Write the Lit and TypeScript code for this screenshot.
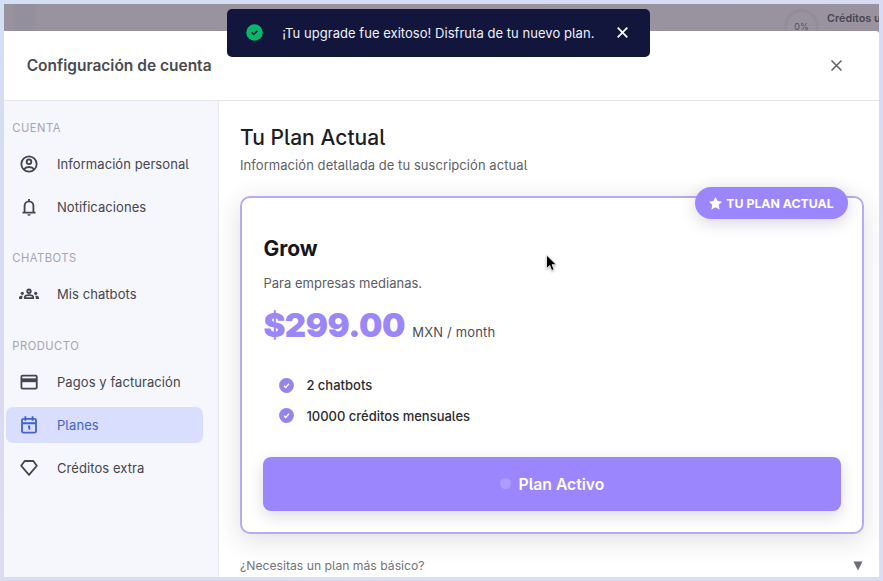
import { LitElement, html, css, svg } from "lit";
import { customElement } from "lit/decorators.js";
import { classMap } from "lit/directives/class-map.js";

const icons: Record<string, unknown> = {
  user: svg`<circle cx="12" cy="12" r="9.2"/><circle cx="12" cy="9.400" r="2.800"/><path d="M5.600 18.600c1.600-2.100 3.900-3 6.400-3s4.800.9 6.400 3"/>`,
  bell: svg`<path d="M4.200 18.700h15.600M6.700 18.600V10.600a5.300 5.300 0 0 1 10.600 0v8M12 2.300v2.500"/><path class="solid" d="M10 20.600h4a2 2 0 0 1-4 0z"/>`,
  groups: svg`<circle cx="12" cy="8.700" r="2.100"/><path d="M7 17v-1c0-1.700 2.400-2.700 5-2.700s5 1 5 2.700v1z"/><circle class="solid" cx="4" cy="11.200" r="1.900"/><circle class="solid" cx="20" cy="11.200" r="1.900"/><path class="solid" d="M0 18v-1.500c0-2 1.700-2.700 4.800-2.500-.8.900-1 1.900-1 4zM24 18v-1.500c0-2-1.700-2.700-4.800-2.500.8.900 1 1.900 1 4z"/>`,
  card: svg`<rect x="2.900" y="4.300" width="18.400" height="15.600" rx="1.300"/><path class="solid" d="M2.700 7.600h18.800v4.600H2.700z"/>`,
  calendar: svg`<rect x="3.600" y="4.600" width="16.800" height="16.600" rx="1.800"/><path d="M3.600 9.900h16.800M7.700 1.500v5.300M16.300 1.500v5.300M10.800 13.800h1.600v4"/>`,
  diamond: svg`<path d="M6.800 3.600h10.400l4.200 5.700L12 20.300 2.600 9.300z"/>`,
};

const sections = [
  { label: "CUENTA", items: [["user", "Información personal"], ["bell", "Notificaciones"]] },
  { label: "CHATBOTS", items: [["groups", "Mis chatbots"]] },
  { label: "PRODUCTO", items: [["card", "Pagos y facturación"], ["calendar", "Planes"], ["diamond", "Créditos extra"]] },
];

@customElement("account-sidebar")
class AccountSidebar extends LitElement {
  static styles = css`
    :host { display: block; box-sizing: border-box; width: 215px; flex: none; padding: 18px 15px 0 2px;
      background: #f6f6fd; border-right: 1px solid #e6e6ec; }
    .section { margin-bottom: 24.500px; }
    .label { height: 16px; line-height: 18px; margin: 0 0 11px 6.300px; font-size: 11.200px; color: #a5a5ae; letter-spacing: .5px; }
    .list { display: flex; flex-direction: column; gap: 7px; }
    .item { display: flex; align-items: center; height: 36px; border-radius: 7px; color: #45454d;
      font-size: 13px; letter-spacing: .07px; padding-left: 13.300px; gap: 17.700px; }
    .item.active { background: #d9deff; color: #4264c8; }
    .icon { width: 20px; height: 20px; fill: none; stroke: currentColor; stroke-width: 2.200; stroke-linejoin: round; }
    .solid { fill: currentColor; stroke: none; }
    .name { white-space: nowrap; }
  `;
  render() {
    return html`${sections.map((s) => html`
      <div class="section">
        <div class="label">${s.label}</div>
        <div class="list">
          ${s.items.map(([icon, name]) => html`
            <div class=${classMap({ item: true, active: name === "Planes" })}>
              <svg class="icon" viewBox="0 0 24 24">${icons[icon]}</svg>
              <span class="name">${name}</span>
            </div>`)}
        </div>
      </div>`)}`;
  }
}

@customElement("plan-card")
class PlanCard extends LitElement {
  static styles = css`
    :host { display: block; box-sizing: border-box; position: relative; height: 338px; border: 2px solid #b8a9f3;
      border-radius: 10px; padding: 35px 21px 0 21.400px; background: #fff; box-shadow: 0 6px 26px rgba(40, 40, 60, .15); }
    .badge { position: absolute; right: 14px; top: -11px; width: 153px; height: 32px; border-radius: 16px;
      background: #9b86fe; color: #fff; display: flex; align-items: center; justify-content: center; gap: 4px;
      font-size: 12.300px; font-weight: 700; box-shadow: 0 4px 16px rgba(60, 50, 100, .2); }
    .badge-text { white-space: nowrap; }
    .star { width: 13px; height: 13px; fill: #fff; }
    .plan { height: 30px; line-height: 32px; font-size: 21px; font-weight: 700; color: #15151f; }
    .desc { margin-top: 9px; height: 20px; line-height: 23px; font-size: 13px; color: #5c5c64; letter-spacing: .02px; }
    .price { display: flex; align-items: baseline; gap: 7.500px; margin-top: 9px; height: 48px; line-height: 48px; }
    .amount { font-size: 33px; font-weight: 900; letter-spacing: -.5px; color: #9b86fa; }
    .unit { font-size: 13px; letter-spacing: .15px; color: #4c4c55; }
    .features { display: flex; flex-direction: column; gap: 10.500px; margin: 26px 0 0 15.500px; }
    .feature { display: flex; align-items: center; height: 20px; gap: 12.500px; font-size: 13px; font-weight: 500; color: #2b2b33; }
    .check { width: 15px; height: 15px; }
    .button { display: flex; align-items: center; justify-content: center; gap: 7.500px; margin-top: 31px; height: 54px;
      border-radius: 8px; background: #9b86fe; color: #fff; font-size: 15.700px; font-weight: 600;
      box-shadow: 0 5px 15px rgba(40, 40, 70, .16); }
    .button-text { line-height: 20px; padding-top: 2px; }
    .dot { width: 11px; height: 11px; border-radius: 50%; background: #ae9dff; }
  `;
  feature(text: string) {
    return html`<div class="feature">
      <svg class="check" viewBox="0 0 15 15"><circle cx="7.500" cy="7.500" r="7.400" fill="#9683ed"/>
        <path d="M5 7.800l1.700 1.700L10 5.700" fill="none" stroke="#fff" stroke-width="1.300"/></svg>
      <span class="feature-text">${text}</span>
    </div>`;
  }
  render() {
    return html`
      <div class="badge">
        <svg class="star" viewBox="0 0 24 24"><path d="M12 0l3.800 7.500 8.200 1.100-6 5.700 1.600 8.700L12 18.800 4.400 23 6 14.300 0 8.600l8.200-1.100z"/></svg>
        <span class="badge-text">TU PLAN ACTUAL</span>
      </div>
      <div class="plan">Grow</div>
      <div class="desc">Para empresas medianas.</div>
      <div class="price"><span class="amount">$299.00</span><span class="unit">MXN / month</span></div>
      <div class="features">${this.feature("2 chatbots")}${this.feature("10000 créditos mensuales")}</div>
      <div class="button"><span class="dot"></span><span class="button-text">Plan Activo</span></div>
    `;
  }
}

@customElement("app-root")
class AppRoot extends LitElement {
  static styles = css`
    :host { display: block; box-sizing: border-box; position: relative; width: 883px; height: 581px; padding: 4px; overflow: hidden;
      background: linear-gradient(165deg, #d3dff3, #dadaf3 45%, #dcdcf4);
      font-family: Inter, "Liberation Sans", sans-serif; font-feature-settings: "cv05"; }
    .screen { display: flex; flex-direction: column; height: 573px; overflow: hidden; background: #98939e; }
    .backdrop { display: flex; justify-content: flex-end; height: 26.500px; flex: none; overflow: hidden;
      background: linear-gradient(90deg, #98939e 8px, #948f9c 12px, #948f9c 30px, #98939e 34px); }
    .ring { box-sizing: border-box; width: 35px; height: 35px; margin: 5px 8px 0 0; border: 3px solid #928d99; border-radius: 50%;
      display: flex; justify-content: center; align-items: center; flex: none; font-size: 9px; color: #55505f; }
    .credits { width: 52px; margin-top: 7px; line-height: 16px; font-size: 10.800px; font-weight: 600; color: #4a4555; white-space: nowrap; }
    .modal { display: flex; flex-direction: column; flex: 1; min-height: 0; background: #fff; border-radius: 0 3px 0 0; }
    .header { display: flex; align-items: center; justify-content: space-between; box-sizing: border-box; height: 70px; flex: none;
      padding: 0 36px 0 22.700px; border-bottom: 1px solid #e5e5eb; }
    .heading { font-size: 15.500px; font-weight: 600; color: #4a4a52; }
    .close { width: 13px; height: 13px; fill: none; stroke: #606066; stroke-width: 1.500; }
    .body { display: flex; flex: 1; min-height: 0; }
    .content { flex: 1; min-width: 0; padding: 22px 15px 0 21px; }
    .title { height: 28px; line-height: 29px; font-size: 21px; font-weight: 500; letter-spacing: .05px; color: #1d1d26; }
    .subtitle { margin: 4px 0 21.500px; height: 20px; line-height: 21px; font-size: 13px; letter-spacing: .06px; color: #5f5f67; }
    .more { display: flex; justify-content: space-between; align-items: center; height: 20px; margin-top: 21.500px; font-size: 12.200px; color: #73737c; }
    .arrow { width: 10px; height: 10px; margin-right: 1px; fill: #6d6d77; }
    .toast { position: absolute; left: 227px; top: 8.500px; width: 423px; height: 48.500px; box-sizing: border-box; padding: 0 22px 0 19.200px;
      border-radius: 5px; background: #12163d; color: #eef0fb; display: flex; align-items: center; font-size: 13px; letter-spacing: .04px; }
    .ok { width: 17px; height: 17px; margin-right: 19px; }
    .message { flex: 1; white-space: nowrap; }
    .dismiss { width: 11px; height: 11px; stroke: #fff; stroke-width: 1.700; fill: none; }
    .cursor { position: absolute; left: 544.500px; top: 254px; width: 13px; height: 19px; filter: drop-shadow(0 1px 1px rgba(0, 0, 0, .3)); }
  `;
  render() {
    return html`
      <div class="screen">
        <div class="backdrop"><div class="ring">0%</div><div class="credits">Créditos u</div></div>
        <div class="modal">
          <div class="header">
            <div class="heading">Configuración de cuenta</div>
            <svg class="close" viewBox="0 0 13 13"><path d="M1.500 1.500l10 10M11.500 1.500l-10 10"/></svg>
          </div>
          <div class="body">
            <account-sidebar></account-sidebar>
            <div class="content">
              <div class="title"><span class="title-text">Tu Plan Actual</span></div>
              <div class="subtitle">Información detallada de tu suscripción actual</div>
              <plan-card></plan-card>
              <div class="more"><span class="question">¿Necesitas un plan más básico?</span>
                <svg class="arrow" viewBox="0 0 10 10"><path d="M.5.5h9L5 9.500z"/></svg></div>
            </div>
          </div>
        </div>
      </div>
      <div class="toast">
        <svg class="ok" viewBox="0 0 17 17"><circle cx="8.500" cy="8.500" r="8.300" fill="#08b768"/><path d="M5.700 8.500l2 2 3.700-3.600" fill="none" stroke="#12163d" stroke-width="1.500"/></svg>
        <span class="message">¡Tu upgrade fue exitoso! Disfruta de tu nuevo plan.</span>
        <svg class="dismiss" viewBox="0 0 11 11"><path d="M.7.7l9.600 9.600M10.300.7L.7 10.300"/></svg>
      </div>
      <svg class="cursor" viewBox="0 0 13 19"><path d="M1.500 1v13.500l3.200-3 2 5 2.400-1-2-4.800h4.300z" fill="#000" stroke="#fff" stroke-width=".8"/></svg>
    `;
  }
}
